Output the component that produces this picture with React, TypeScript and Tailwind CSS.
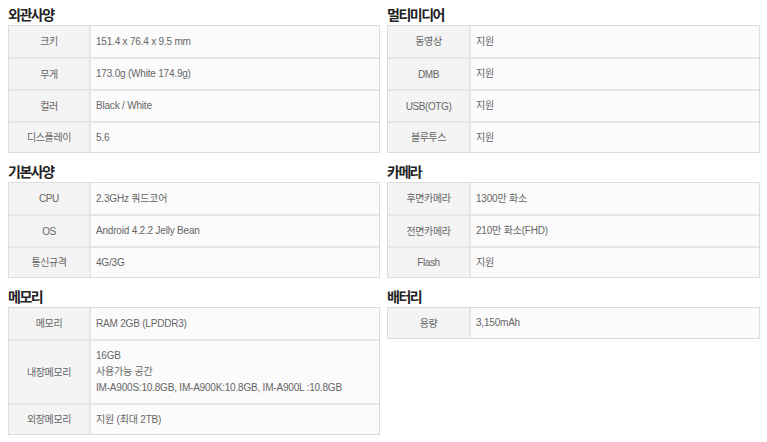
type Row = { label: string; value: string[]; tall?: boolean };

type Section = { title: string; rows: Row[] };

const LEFT: Section[] = [
  {
    title: "외관사양",
    rows: [
      { label: "크키", value: ["151.4 x 76.4 x 9.5 mm"] },
      { label: "무게", value: ["173.0g (White 174.9g)"] },
      { label: "컬러", value: ["Black / White"] },
      { label: "디스플레이", value: ["5.6"] },
    ],
  },
  {
    title: "기본사양",
    rows: [
      { label: "CPU", value: ["2.3GHz 쿼드코어"] },
      { label: "OS", value: ["Android 4.2.2 Jelly Bean"] },
      { label: "통신규격", value: ["4G/3G"] },
    ],
  },
  {
    title: "메모리",
    rows: [
      { label: "메모리", value: ["RAM 2GB (LPDDR3)"] },
      {
        label: "내장메모리",
        value: ["16GB", "사용가능 공간", "IM-A900S:10.8GB, IM-A900K:10.8GB, IM-A900L :10.8GB"],
        tall: true,
      },
      { label: "외장메모리", value: ["지원 (최대 2TB)"] },
    ],
  },
];

const RIGHT: Section[] = [
  {
    title: "멀티미디어",
    rows: [
      { label: "동영상", value: ["지원"] },
      { label: "DMB", value: ["지원"] },
      { label: "USB(OTG)", value: ["지원"] },
      { label: "블루투스", value: ["지원"] },
    ],
  },
  {
    title: "카메라",
    rows: [
      { label: "후면카메라", value: ["1300만 화소"] },
      { label: "전면카메라", value: ["210만 화소(FHD)"] },
      { label: "Flash", value: ["지원"] },
    ],
  },
  {
    title: "배터리",
    rows: [{ label: "용량", value: ["3,150mAh"] }],
  },
];

function SpecTable({ section, labelW }: { section: Section; labelW: string }) {
  const n = section.rows.length;
  return (
    <div className="mt-[9px] first:mt-0">
      <h3 className="h-5 text-[14px] leading-5 font-bold text-[#222] tracking-[-1.5px]">{section.title}</h3>
      <div className="border border-[#dcdcdc] bg-[#fbfbfb]">
        {section.rows.map((r, i) => {
          const h = (r.tall ? 64 : 32) - (i === 0 ? 1 : 0) - (i === n - 1 ? 1 : 0);
          return (
            <div
              key={r.label}
              className={`flex ${i > 0 ? "border-t-2 border-[#e6e6e6]" : ""}`}
              style={{ height: h }}
            >
              <div
                className={`${labelW} shrink-0 flex items-center justify-center bg-[#f4f4f4] border-r-2 border-[#e6e6e6] text-[10px] tracking-[-0.4px] text-[#666]`}
              >
                {r.label}
              </div>
              <div className="flex-1 flex flex-col justify-center pl-[5px] text-[10px] leading-4 tracking-[-0.2px] text-[#666]">
                {r.value.map((v) => (
                  <div key={v}>{v}</div>
                ))}
              </div>
            </div>
          );
        })}
      </div>
    </div>
  );
}

export default function App() {
  return (
    <div
      className="w-[767px] h-[442px] bg-white pt-[5px] pl-[8px] flex gap-[7px]"
      style={{ fontFamily: '"Liberation Sans", "Noto Sans CJK KR", sans-serif' }}
    >
      <div className="w-[372px] flex flex-col">
        {LEFT.map((s) => (
          <SpecTable key={s.title} section={s} labelW="w-[82px]" />
        ))}
      </div>
      <div className="w-[373px] flex flex-col">
        {RIGHT.map((s) => (
          <SpecTable key={s.title} section={s} labelW="w-[83px]" />
        ))}
      </div>
    </div>
  );
}
